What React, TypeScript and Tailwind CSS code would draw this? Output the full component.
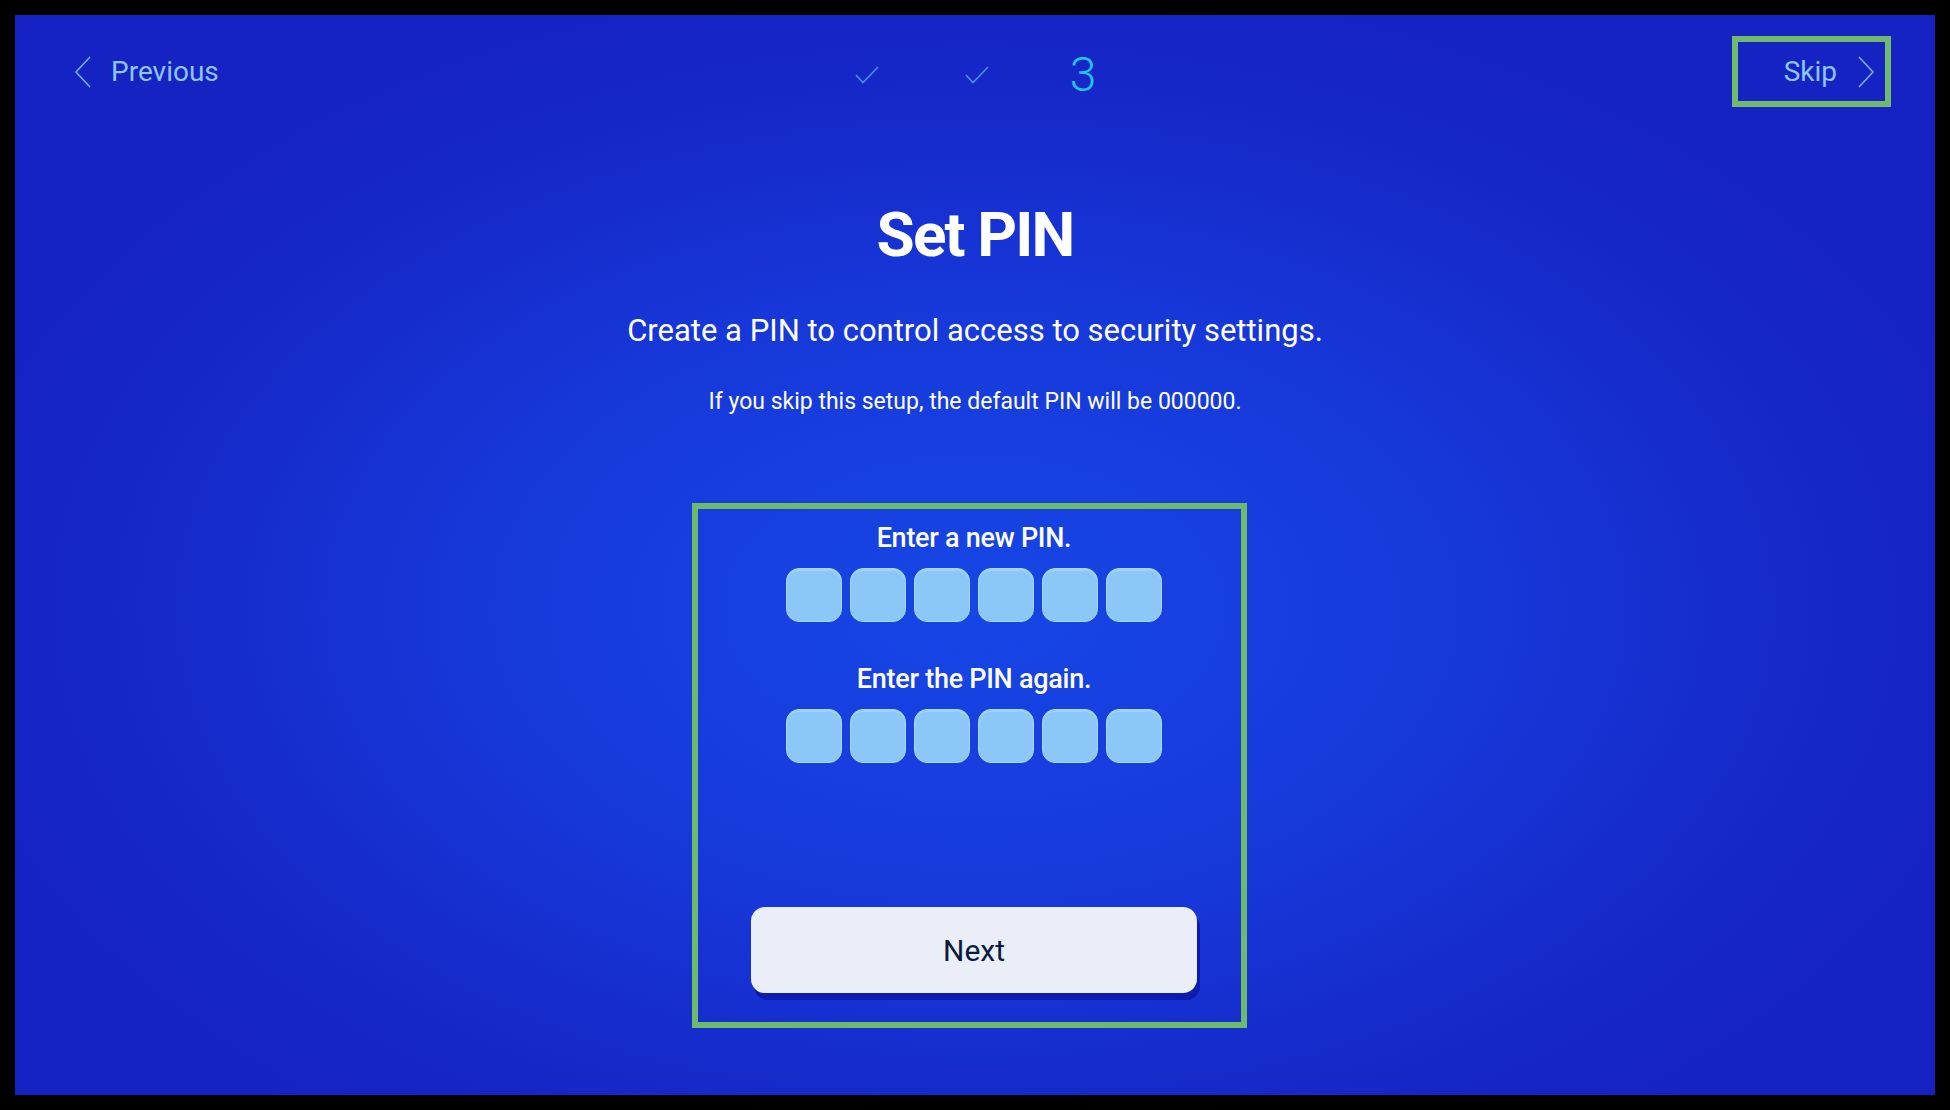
import {ReactNode} from 'react'

const font = {fontFamily: 'Roboto, "Noto Sans", sans-serif'}

const ChevronLeft = () => (
    <svg width="18" height="32" viewBox="0 0 18 32" fill="none">
        <path d="M16 1 L2 16 L16 31" stroke="#74b2f4" strokeWidth="1.6" strokeLinejoin="miter"/>
    </svg>
)

const ChevronRight = () => (
    <svg width="18" height="32" viewBox="0 0 18 32" fill="none">
        <path d="M2 1 L16 16 L2 31" stroke="#74b2f4" strokeWidth="1.6" strokeLinejoin="miter"/>
    </svg>
)

const Check = () => (
    <svg width="24" height="18" viewBox="0 0 24 18" fill="none">
        <path d="M1 9 L8 16.5 L23 1" stroke="#4b8ff0" strokeWidth="1.6"/>
    </svg>
)

const PinRow = () => (
    <div className="flex gap-[8px]">
        {[0, 1, 2, 3, 4, 5].map(i => (
            <div key={i}
                 className="h-[54px] w-[56px] rounded-[13px] border border-[#a9d9fc] bg-[#8bc8f8] shadow-[inset_0_2px_0_rgba(255,255,255,0.18)]"/>
        ))}
    </div>
)

const Label = ({children}: { children: ReactNode }) => (
    <div className="text-[27px] font-medium leading-[34px] tracking-[-0.01em] text-white">{children}</div>
)

const App = () => {
    return (
        <div className="h-[1110px] w-[1950px] bg-black p-[15px]" style={font}>
            <div
                className="flex h-full w-full flex-col bg-[radial-gradient(ellipse_55%_60%_at_50%_55%,#1646e5_0%,#1739da_45%,#1628c8_80%,#1523c2_100%)]">
                {/* top bar */}
                <div className="flex h-[92px] items-end justify-between pl-[59px] pr-[44px]">
                    <div className="flex h-[71px] w-[300px] items-center gap-[19px]">
                        <ChevronLeft/>
                        <span className="text-[28px] leading-none text-[#8fc4f8]">Previous</span>
                    </div>
                    <div className="flex h-[71px] items-center pt-[6px] pr-[14px]">
                        <Check/>
                        <div className="ml-[86px]"><Check/></div>
                        <span className="ml-[81px] text-[48px] font-light leading-none text-[#22c4f2]">3</span>
                    </div>
                    <div className="flex w-[300px] justify-end">
                        <div
                            className="flex h-[71px] w-[159px] items-center justify-end gap-[20px] border-[6px] border-[#6fba6d] pr-[10px]">
                            <span className="text-[28px] leading-none text-[#8fc4f8]">Skip</span>
                            <ChevronRight/>
                        </div>
                    </div>
                </div>

                {/* content */}
                <div className="flex flex-col items-center">
                    <h1 className="mt-[96px] text-[62px] font-bold leading-[64px] tracking-[-0.03em] text-white">Set PIN</h1>
                    <p className="mt-[44px] text-[31px] leading-[40px] text-white">
                        Create a PIN to control access to security settings.
                    </p>
                    <p className="mt-[36px] text-[23px] leading-[30px] text-white">
                        If you skip this setup, the default PIN will be 000000.
                    </p>

                    <div
                        className="mr-[12px] mt-[86px] flex h-[525px] w-[555px] flex-col items-center border-[6px] border-[#6cba6b] pl-[10px] pt-[12px]">
                        <Label>Enter a new PIN.</Label>
                        <div className="mt-[13px]"><PinRow/></div>
                        <div className="mt-[40px]"><Label>Enter the PIN again.</Label></div>
                        <div className="mt-[13px]"><PinRow/></div>
                        <button
                            className="mt-[144px] flex h-[86px] w-[446px] items-center justify-center rounded-[14px] bg-[#e9eef8] text-[30px] font-normal text-[#0c1a3d] shadow-[3px_7px_0_#0b1cae]">
                            Next
                        </button>
                    </div>
                </div>
            </div>
        </div>
    )
}

export default App
